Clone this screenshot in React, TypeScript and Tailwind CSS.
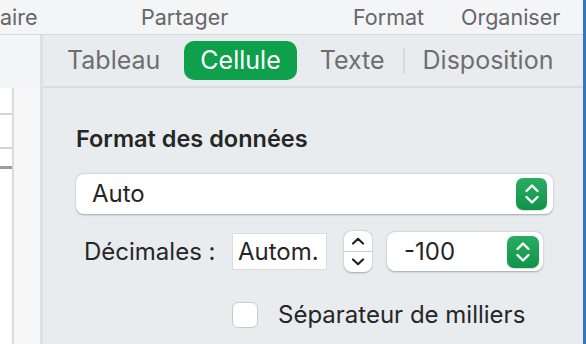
import React from 'react';

function UpDown({ className = '' }: { className?: string }) {
  return (
    <svg viewBox="0 0 18 26" className={className} fill="none" stroke="currentColor" strokeWidth="2.4" strokeLinecap="round" strokeLinejoin="round">
      <path d="M3.5 10 L9 4.5 L14.5 10" />
      <path d="M3.5 16 L9 21.5 L14.5 16" />
    </svg>
  );
}

function GreenStepper({ className = '' }: { className?: string }) {
  return (
    <div
      className={`flex items-center justify-center rounded-[7px] bg-gradient-to-b from-[#27ad63] to-[#0e9448] text-white shadow-[0_1px_1px_rgba(0,0,0,0.15)] ${className}`}
    >
      <UpDown className="h-[26px] w-[18px]" />
    </div>
  );
}

export default function App() {
  return (
    <div
      className="flex h-[344px] w-[586px] overflow-hidden bg-[#e9ecef] text-[#262626]"
      style={{ fontFamily: 'Inter, "Noto Sans", sans-serif' }}
    >
      <div className="flex flex-1 flex-col">
        {/* toolbar labels */}
        <div className="flex h-[35px] shrink-0 items-center border-b border-[#d6d8da] bg-[#f3f5f7] text-[21.5px] text-[#666]">
          <span className="w-[141px]">aire</span>
          <span className="w-[212px]">Partager</span>
          <span className="w-[108px]">Format</span>
          <span>Organiser</span>
        </div>

        <div className="flex flex-1">
          {/* sheet edge */}
          <div className="flex w-[43px] shrink-0 flex-col">
            <div className="h-[53px] border-r-[3px] border-[#dedfe0] bg-[#f3f5f7]" />
            <div className="flex flex-1">
              <div className="flex w-[12px] flex-col bg-white">
                <div className="h-[27px] border-b-2 border-[#d4d4d4]" />
                <div className="h-[34px] border-b-2 border-[#d4d4d4]" />
                <div className="h-[20px] border-b-[3px] border-[#9c9c9c]" />
              </div>
              <div className="w-[2px] bg-[#dcdcdc]" />
              <div className="flex-1 bg-[#f7f7f7]" />
              <div className="w-[3px] bg-[#dedfe0]" />
            </div>
          </div>

          {/* inspector */}
          <div className="flex flex-1 flex-col">
            <div className="flex h-[53px] items-center border-b-2 border-[#d9dbdd] pl-[24px] text-[25px] text-[#6e6e6e]">
              <span>Tableau</span>
              <span className="ml-[24px] flex h-[39px] items-center rounded-[10px] bg-[#0ea04b] px-[16px] text-white">
                Cellule
              </span>
              <span className="ml-[23px]">Texte</span>
              <span className="mx-[18px] h-[26px] w-[2px] bg-[#d6d8da]" />
              <span>Disposition</span>
            </div>

            <div className="flex flex-col pl-[33px] pr-[30px] pt-[38px]">
              <div className="text-[23.5px] font-semibold leading-[26px]">Format des données</div>

              <div className="mt-[22px] flex h-[40px] items-center justify-between rounded-[8px] bg-white pl-[16px] pr-[6px] text-[24px] shadow-[0_0.5px_2px_rgba(0,0,0,0.3)]">
                <span>Auto</span>
                <GreenStepper className="h-[32px] w-[31px]" />
              </div>

              <div className="mt-[17px] flex items-center">
                <span className="ml-[8px] w-[148px] text-[24px]">Décimales :</span>
                <div className="flex h-[37px] w-[95px] items-center border border-[#dcdcdc] bg-white pl-[5px] text-[24px]">
                  Autom.
                </div>
                <div className="ml-[17px] flex h-[41px] w-[28px] flex-col overflow-hidden rounded-[8px] bg-white shadow-[0_0.5px_2px_rgba(0,0,0,0.3)]">
                  <div className="flex flex-1 items-center justify-center border-b border-[#cfcfcf]">
                    <svg viewBox="0 0 14 8" className="h-[8px] w-[14px]" fill="none" stroke="#222" strokeWidth="2.2" strokeLinecap="round" strokeLinejoin="round">
                      <path d="M2 6.5 L7 1.8 L12 6.5" />
                    </svg>
                  </div>
                  <div className="flex flex-1 items-center justify-center">
                    <svg viewBox="0 0 14 8" className="h-[8px] w-[14px]" fill="none" stroke="#222" strokeWidth="2.2" strokeLinecap="round" strokeLinejoin="round">
                      <path d="M2 1.5 L7 6.2 L12 1.5" />
                    </svg>
                  </div>
                </div>
                <div className="ml-[15px] flex h-[39px] w-[156px] items-center justify-between rounded-[8px] bg-white pl-[17px] pr-[4px] text-[24px] shadow-[0_0.5px_2px_rgba(0,0,0,0.3)]">
                  <span>-100</span>
                  <GreenStepper className="h-[32px] w-[32px]" />
                </div>
              </div>

              <div className="mt-[25px] flex items-center pl-[156px]">
                <div className="h-[26px] w-[26px] rounded-[6px] border border-[#c9c9c9] bg-white" />
                <span className="ml-[20px] text-[24px]">Séparateur de milliers</span>
              </div>
            </div>
          </div>
        </div>
      </div>
      <div className="w-[3px] shrink-0 bg-[#2f78c4]" />
    </div>
  );
}
